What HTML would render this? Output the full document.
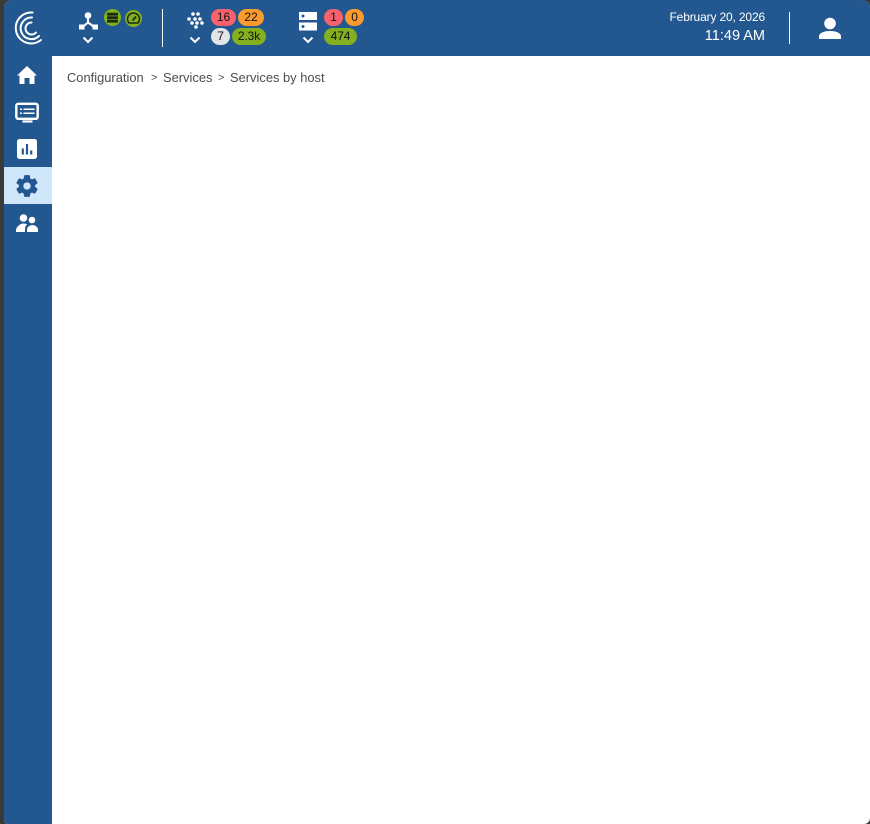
<!DOCTYPE html>
<html>
<head>
<meta charset="utf-8">
<style>
html,body{margin:0;padding:0;width:870px;height:824px;overflow:hidden;background:#3a3a3a;font-family:"Liberation Sans",sans-serif}
#app{position:absolute;left:4px;top:0;width:866px;height:824px;background:#fff;border-radius:8px 8px 6px 4px;overflow:hidden}
#top{position:absolute;left:0;top:0;width:866px;height:56px;background:#235790}
#side{position:absolute;left:0;top:56px;width:48px;height:768px;background:#235790}
#act{position:absolute;left:0;top:111px;width:48px;height:37px;background:#cfe6fb}
svg{position:absolute;display:block;overflow:visible}
.b{position:absolute;height:17px;line-height:17px;border-radius:9px;text-align:center;font-size:12px;color:#111;letter-spacing:-.1px}
.r{background:#f7626d}.o{background:#fb9a2c}.g{background:#84b01f}.w{background:#e2e4e8}
.sep{position:absolute;width:1px;background:#fff}
.t{position:absolute;color:#fff;white-space:nowrap;text-align:right}
.crumb{position:absolute;top:70px;font-size:12.900px;line-height:15px;color:#4d4d4d;white-space:nowrap}
.gt{font-size:11px;top:71px}
</style>
</head>
<body>
<div id="app">
<div id="top"></div>
<div id="side"><div id="act"></div></div>
</div>

<!-- logo -->
<svg style="left:0;top:0" width="60" height="56" fill="none" stroke="#fff" stroke-linecap="round" stroke-width="2">
<path d="M32.500 12.500A15.500 15.500 0 1 0 41 40"/>
<path d="M32 17.500A10.800 10.800 0 1 0 39 36"/>
<path d="M31.500 22.500A6 6 0 1 0 36 32.500"/>
</svg>

<!-- topology -->
<svg style="left:78px;top:11px" width="20" height="20" fill="#fff">
<circle cx="10" cy="4.500" r="3.300"/>
<rect x="1" y="13.500" width="5.500" height="5"/>
<rect x="14.500" y="13.500" width="5.500" height="5"/>
<path d="M10 7v5M10 11.500L4 16.500M10 11.500L17 16.500" stroke="#fff" stroke-width="2" fill="none"/>
</svg>
<svg style="left:82px;top:36px" width="12" height="8" fill="none" stroke="#fff" stroke-width="2"><path d="M1.500 1.500L6 6l4.500-4.500"/></svg>
<svg style="left:103.500px;top:8.500px" width="18" height="18">
<circle cx="8.500" cy="8.500" r="8.500" fill="#84b01f"/>
<rect x="3" y="3.800" width="11" height="2.800" rx=".6" fill="#1c2a14"/>
<rect x="3" y="7.300" width="11" height="2.800" rx=".6" fill="#1c2a14"/>
<rect x="3" y="10.800" width="11" height="2.800" rx=".6" fill="#1c2a14"/>
</svg>
<svg style="left:125px;top:9.500px" width="18" height="18">
<circle cx="8.500" cy="8.500" r="8.500" fill="#84b01f"/>
<path d="M4 13A6 6 0 1 1 13 13Z" fill="none" stroke="#1c2a14" stroke-width="1.500"/>
<path d="M7.500 10.500L11 6.500" stroke="#1c2a14" stroke-width="1.800"/>
</svg>
<div class="sep" style="left:162px;top:9px;height:38px"></div>

<!-- services dots -->
<svg style="left:180px;top:6px" width="30" height="30" fill="#fff">
<circle cx="13" cy="8" r="1.800"/><circle cx="18" cy="8" r="1.800"/>
<circle cx="9" cy="13" r="1.800"/><circle cx="15" cy="13" r="1.800"/><circle cx="20" cy="13" r="1.800"/>
<circle cx="12" cy="17" r="1.800"/><circle cx="17" cy="17" r="1.800"/><circle cx="22" cy="17" r="1.800"/>
<circle cx="16" cy="21" r="1.800"/>
</svg>
<svg style="left:189px;top:36px" width="12" height="8" fill="none" stroke="#fff" stroke-width="2"><path d="M1.500 1.500L6 6l4.500-4.500"/></svg>
<div class="b r" style="left:211px;top:9px;width:25px">16</div>
<div class="b o" style="left:238px;top:9px;width:26px">22</div>
<div class="b w" style="left:211px;top:28px;width:19px">7</div>
<div class="b g" style="left:232px;top:28px;width:34px">2.3k</div>

<!-- hosts -->
<svg style="left:299px;top:12px" width="18" height="19" fill="#fff">
<path d="M0 0h18v8H0zM0 10.500h18v8H0z"/>
<circle cx="4" cy="4" r="1.500" fill="#235790"/>
<circle cx="4" cy="14.500" r="1.500" fill="#235790"/>
</svg>
<svg style="left:302px;top:36px" width="12" height="8" fill="none" stroke="#fff" stroke-width="2"><path d="M1.500 1.500L6 6l4.500-4.500"/></svg>
<div class="b r" style="left:324px;top:9px;width:19px">1</div>
<div class="b o" style="left:345px;top:9px;width:19px">0</div>
<div class="b g" style="left:324px;top:28px;width:33px">474</div>

<!-- date/time -->
<div class="t" style="right:105px;top:10px;font-size:12px;line-height:14px;letter-spacing:-.15px">February 20, 2026</div>
<div class="t" style="right:105px;top:28px;font-size:14.500px;line-height:17px">11:49 AM</div>
<div class="sep" style="left:789px;top:12px;height:32px"></div>
<svg style="left:819px;top:17px" width="22" height="23" fill="#fff">
<circle cx="11" cy="6.500" r="5.800"/>
<path d="M0 22v-2.500C0 15.500 6 14 11 14s11 1.500 11 5.500V22Z"/>
</svg>

<!-- sidebar icons -->
<svg style="left:17px;top:66px" width="20" height="18" fill="#fff"><path d="M10 0L20 9.500h-2.500V18h-5v-6h-5v6h-5V9.500H0z"/></svg>
<svg style="left:15px;top:102px" width="24" height="21" fill="none" stroke="#fff">
<rect x="1.300" y="1.800" width="21.400" height="15" rx="2" stroke-width="2.400"/>
<path d="M5 7.300h2M8.500 7.300h11M5 11.300h2M8.500 11.300h11" stroke-width="1.500"/>
<path d="M7.500 19.500h10" stroke-width="2.200"/>
</svg>
<svg style="left:17px;top:139px" width="20" height="20">
<rect width="20" height="20" rx="2.500" fill="#fff"/>
<path d="M5.800 9.500v6M10 5v10.500M14.200 11.500v4" stroke="#235790" stroke-width="2.200"/>
</svg>
<svg style="left:16px;top:175px" width="22" height="22" viewBox="2.500 2 19 20" fill="#235790" stroke="#235790" stroke-width=".5">
<path d="M19.140 12.940c.04-.3.06-.61.06-.94 0-.32-.02-.64-.07-.94l2.030-1.580c.18-.14.23-.41.12-.61l-1.920-3.320c-.12-.22-.37-.29-.59-.22l-2.390.96c-.5-.38-1.030-.7-1.620-.94l-.36-2.540c-.04-.24-.24-.41-.48-.41h-3.840c-.24 0-.43.17-.47.41l-.36 2.540c-.59.24-1.130.57-1.620.94l-2.390-.96c-.22-.08-.47 0-.59.22L2.740 8.870c-.12.21-.08.47.12.61l2.030 1.580c-.05.3-.09.63-.09.94s.02.64.07.94l-2.030 1.580c-.18.14-.23.41-.12.61l1.920 3.320c.12.22.37.29.59.22l2.390-.96c.5.38 1.030.7 1.620.94l.36 2.540c.05.24.24.41.48.41h3.840c.24 0 .44-.17.47-.41l.36-2.540c.59-.24 1.130-.56 1.620-.94l2.390.96c.22.08.47 0 .59-.22l1.920-3.320c.12-.22.07-.47-.12-.61l-2.010-1.580zM12 15.600c-1.980 0-3.600-1.620-3.600-3.600s1.620-3.600 3.600-3.600 3.600 1.620 3.600 3.600-1.620 3.600-3.600 3.600z"/>
</svg>
<svg style="left:16px;top:214px" width="23" height="19" fill="#fff">
<circle cx="7.500" cy="4" r="3.800"/>
<circle cx="16" cy="6" r="3.300"/>
<path d="M0 18v-1.500C0 13 4 9.500 7.500 9.500c1.500 0 2.700.4 3.700 1-1.500 1-2.200 2.700-2.200 4.500V18Z"/>
<path d="M11 18v-2.500c0-2.500 3-4.500 5.500-4.500s5.500 2 5.500 4.500V18Z"/>
</svg>

<!-- breadcrumb -->
<div class="crumb" style="left:67px">Configuration</div>
<div class="crumb gt" style="left:151px">&gt;</div>
<div class="crumb" style="left:163px">Services</div>
<div class="crumb gt" style="left:218px">&gt;</div>
<div class="crumb" style="left:230px">Services by host</div>
</body>
</html>
